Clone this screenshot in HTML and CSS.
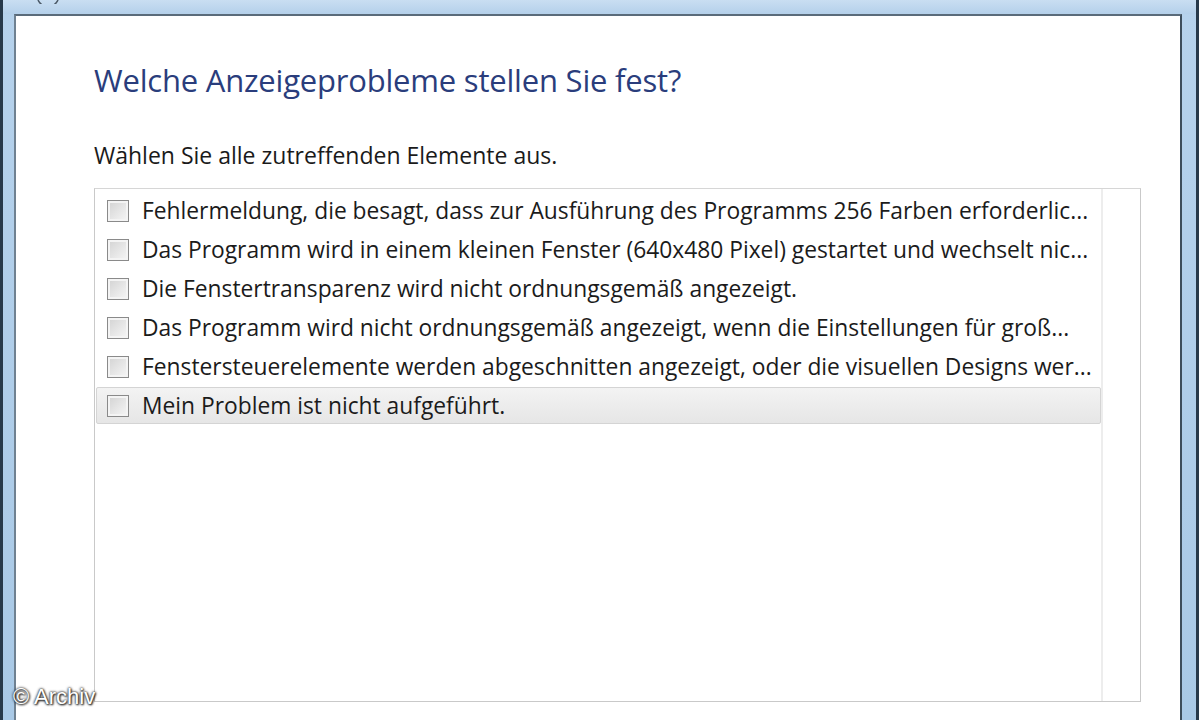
FILE: index.html
```html
<!DOCTYPE html>
<html lang="de">
<head>
  <meta charset="UTF-8">
  <title>Programmkompatibilität - Anzeigeprobleme</title>
  <link rel="stylesheet" href="styles.css">
</head>
<body>
  <div class="window">
    <div class="titlebar">
      <svg class="back-btn" width="30" height="4" viewBox="0 0 30 4">
        <path d="M5 0 A11 11 0 0 0 25 0" fill="none" stroke="#4a5866" stroke-width="1.5"/>
      </svg>
    </div>
    <div class="frame">
      <div class="content">
        <h1 class="heading">Welche Anzeigeprobleme stellen Sie fest?</h1>
        <p class="hint">Wählen Sie alle zutreffenden Elemente aus.</p>
        <div class="listbox">
          <div class="list">
            <div class="row"><span class="check"></span><span class="label">Fehlermeldung, die besagt, dass zur Ausführung des Programms 256 Farben erforderlic...</span></div>
            <div class="row"><span class="check"></span><span class="label">Das Programm wird in einem kleinen Fenster (640x480 Pixel) gestartet und wechselt nic...</span></div>
            <div class="row"><span class="check"></span><span class="label">Die Fenstertransparenz wird nicht ordnungsgemäß angezeigt.</span></div>
            <div class="row"><span class="check"></span><span class="label">Das Programm wird nicht ordnungsgemäß angezeigt, wenn die Einstellungen für groß...</span></div>
            <div class="row"><span class="check"></span><span class="label">Fenstersteuerelemente werden abgeschnitten angezeigt, oder die visuellen Designs wer...</span></div>
            <div class="row selected"><span class="check"></span><span class="label">Mein Problem ist nicht aufgeführt.</span></div>
          </div>
        </div>
      </div>
    </div>
    <div class="watermark">© Archiv</div>
  </div>
</body>
</html>
```

FILE: styles.css
```css
body {
  margin: 0;
  font-family: 'Open Sans', 'Noto Sans', sans-serif;
  background: #fff;
}
.window {
  position: relative;
  width: 1199px;
  height: 720px;
  display: flex;
  flex-direction: column;
  background: linear-gradient(180deg, #b6d2ec 0%, #a9c9e6 100%);
  border-left: 3px solid #27394a;
  border-right: 3px solid #27394a;
  box-sizing: border-box;
  overflow: hidden;
}
.titlebar {
  height: 14px;
  flex: none;
  background: linear-gradient(180deg, #c9def2 0%, #b4d0ea 100%);
  position: relative;
}
.back-btn {
  position: absolute;
  left: 30px;
  top: 0;
}
.frame {
  flex: 1;
  display: flex;
  padding: 0 14px 0 11px;
}
.content {
  flex: 1;
  background: #fff;
  border-top: 2px solid #5a6b7a;
  border-left: 2px solid #6f8191;
  border-right: 2px solid #3d4d5b;
  padding: 0 39px 0 78px;
  display: flex;
  flex-direction: column;
}
.heading {
  margin: 44px 0 0;
  font-weight: normal;
  font-size: 31px;
  line-height: 40px;
  color: #2a3d7c;
  letter-spacing: -0.2px;
}
.hint {
  margin: 41px 0 0;
  font-size: 23px;
  line-height: 28px;
  color: #1a1a1a;
}
.listbox {
  margin-top: 19px;
  height: 512px;
  border: 1px solid #c9c9c9;
  border-top-color: #d6d6d6;
  display: flex;
}
.list {
  width: 1008px;
  border-right: 2px solid #ededed;
  padding: 2px 0 0 1px;
  box-sizing: border-box;
}
.row {
  height: 39px;
  display: flex;
  align-items: center;
  box-sizing: border-box;
  padding-left: 10px;
  border: 1px solid transparent;
  border-radius: 2px;
}
.row.selected {
  height: 37px;
  margin-top: 1px;
  background: linear-gradient(180deg, #f3f3f3 0%, #e6e6e6 100%);
  border-color: #d4d4d4;
}
.check {
  flex: none;
  width: 20px;
  height: 20px;
  border: 1px solid #8a8a8a;
  background: linear-gradient(135deg, #d2d2d2 0%, #ececec 70%, #f6f6f6 100%);
  box-shadow: inset 0 0 0 2px #f4f4f4;
  margin-right: 13px;
}
.label {
  flex: 1;
  font-size: 22.8px;
  color: #1b1b1b;
  white-space: nowrap;
}
.watermark {
  position: absolute;
  left: 10px;
  top: 684px;
  font-family: 'Liberation Sans', Arial, sans-serif;
  font-size: 22px;
  color: #fff;
  text-shadow: 0 0 3px #333, 0 0 2px #333, 1px 1px 2px #222;
}
```
